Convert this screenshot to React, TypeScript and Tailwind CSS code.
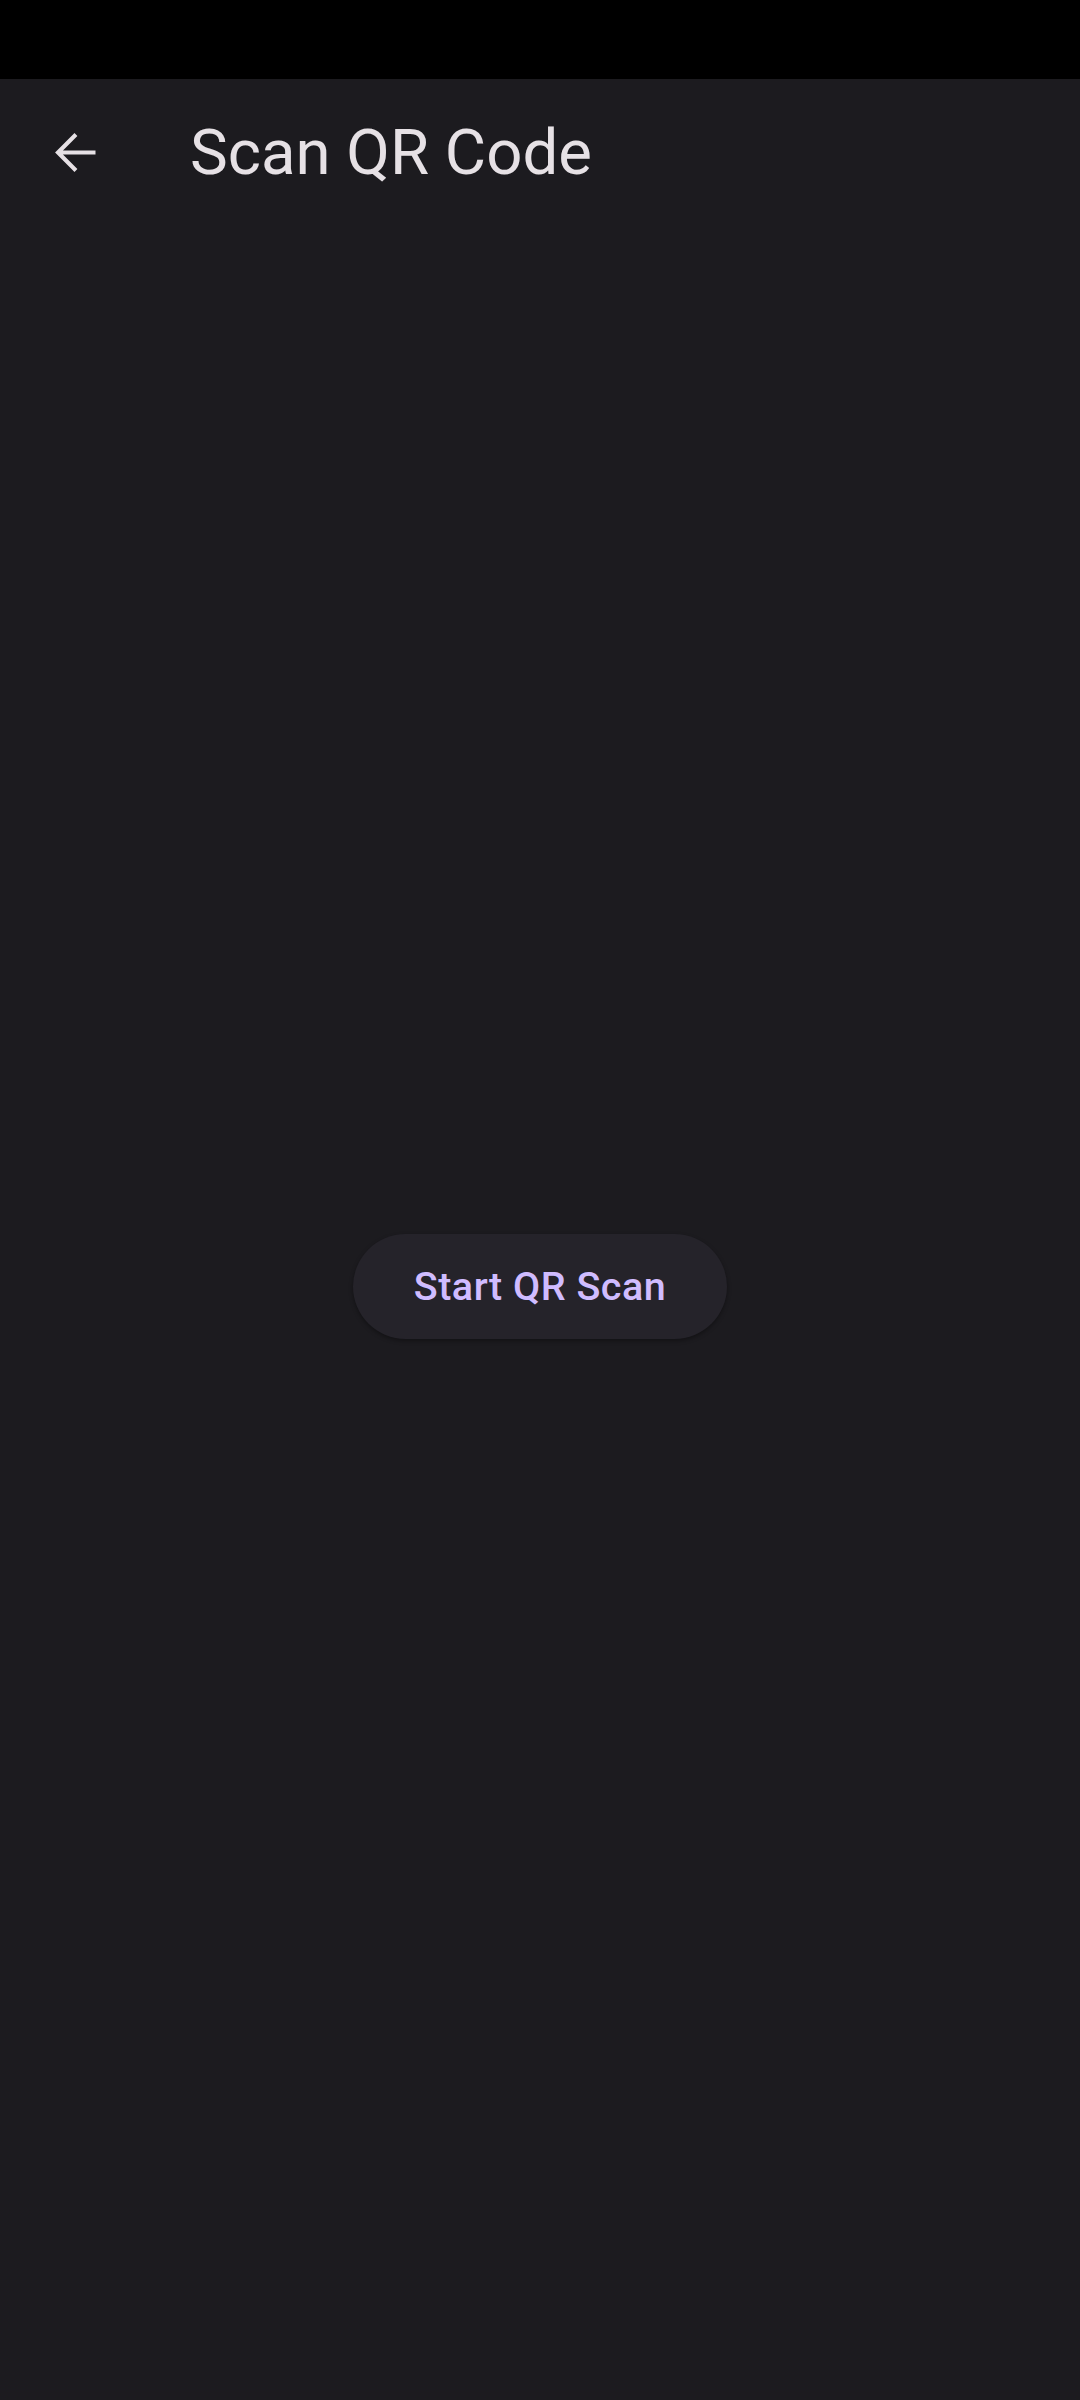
import React from "react";

export default function App() {
  return (
    <div
      className="w-[1080px] h-[2400px] bg-[#1c1b1f] flex flex-col"
      style={{ fontFamily: "Roboto, 'Noto Sans', sans-serif" }}
    >
      <div className="h-[79px] bg-black shrink-0" />
      <div className="h-[146px] shrink-0 flex items-start">
        <div className="mt-[42px] ml-[43px] w-[63px] h-[63px] flex items-center justify-center">
          <svg width="63" height="63" viewBox="0 0 24 24" fill="#e6e1e5">
            <path d="M20 11.2H7.6l5.5-5.5L12 4.6 4.6 12l7.4 7.4 1.1-1.1-5.5-5.5H20v-1.6z" />
          </svg>
        </div>
        <div className="ml-[84px] mt-[34px] text-[63.5px] leading-[80px] text-[#e6e1e5] font-normal">
          Scan QR Code
        </div>
      </div>
      <div className="flex-1 flex flex-col items-center">
        <div className="mt-[1009px] w-[374px] h-[105px] rounded-full bg-[#25232a] shadow-[0_2px_4px_rgba(0,0,0,0.35)] flex items-center justify-center">
          <span className="text-[39.5px] font-medium text-[#d0bcff] tracking-[0.5px]">
            Start QR Scan
          </span>
        </div>
      </div>
    </div>
  );
}
